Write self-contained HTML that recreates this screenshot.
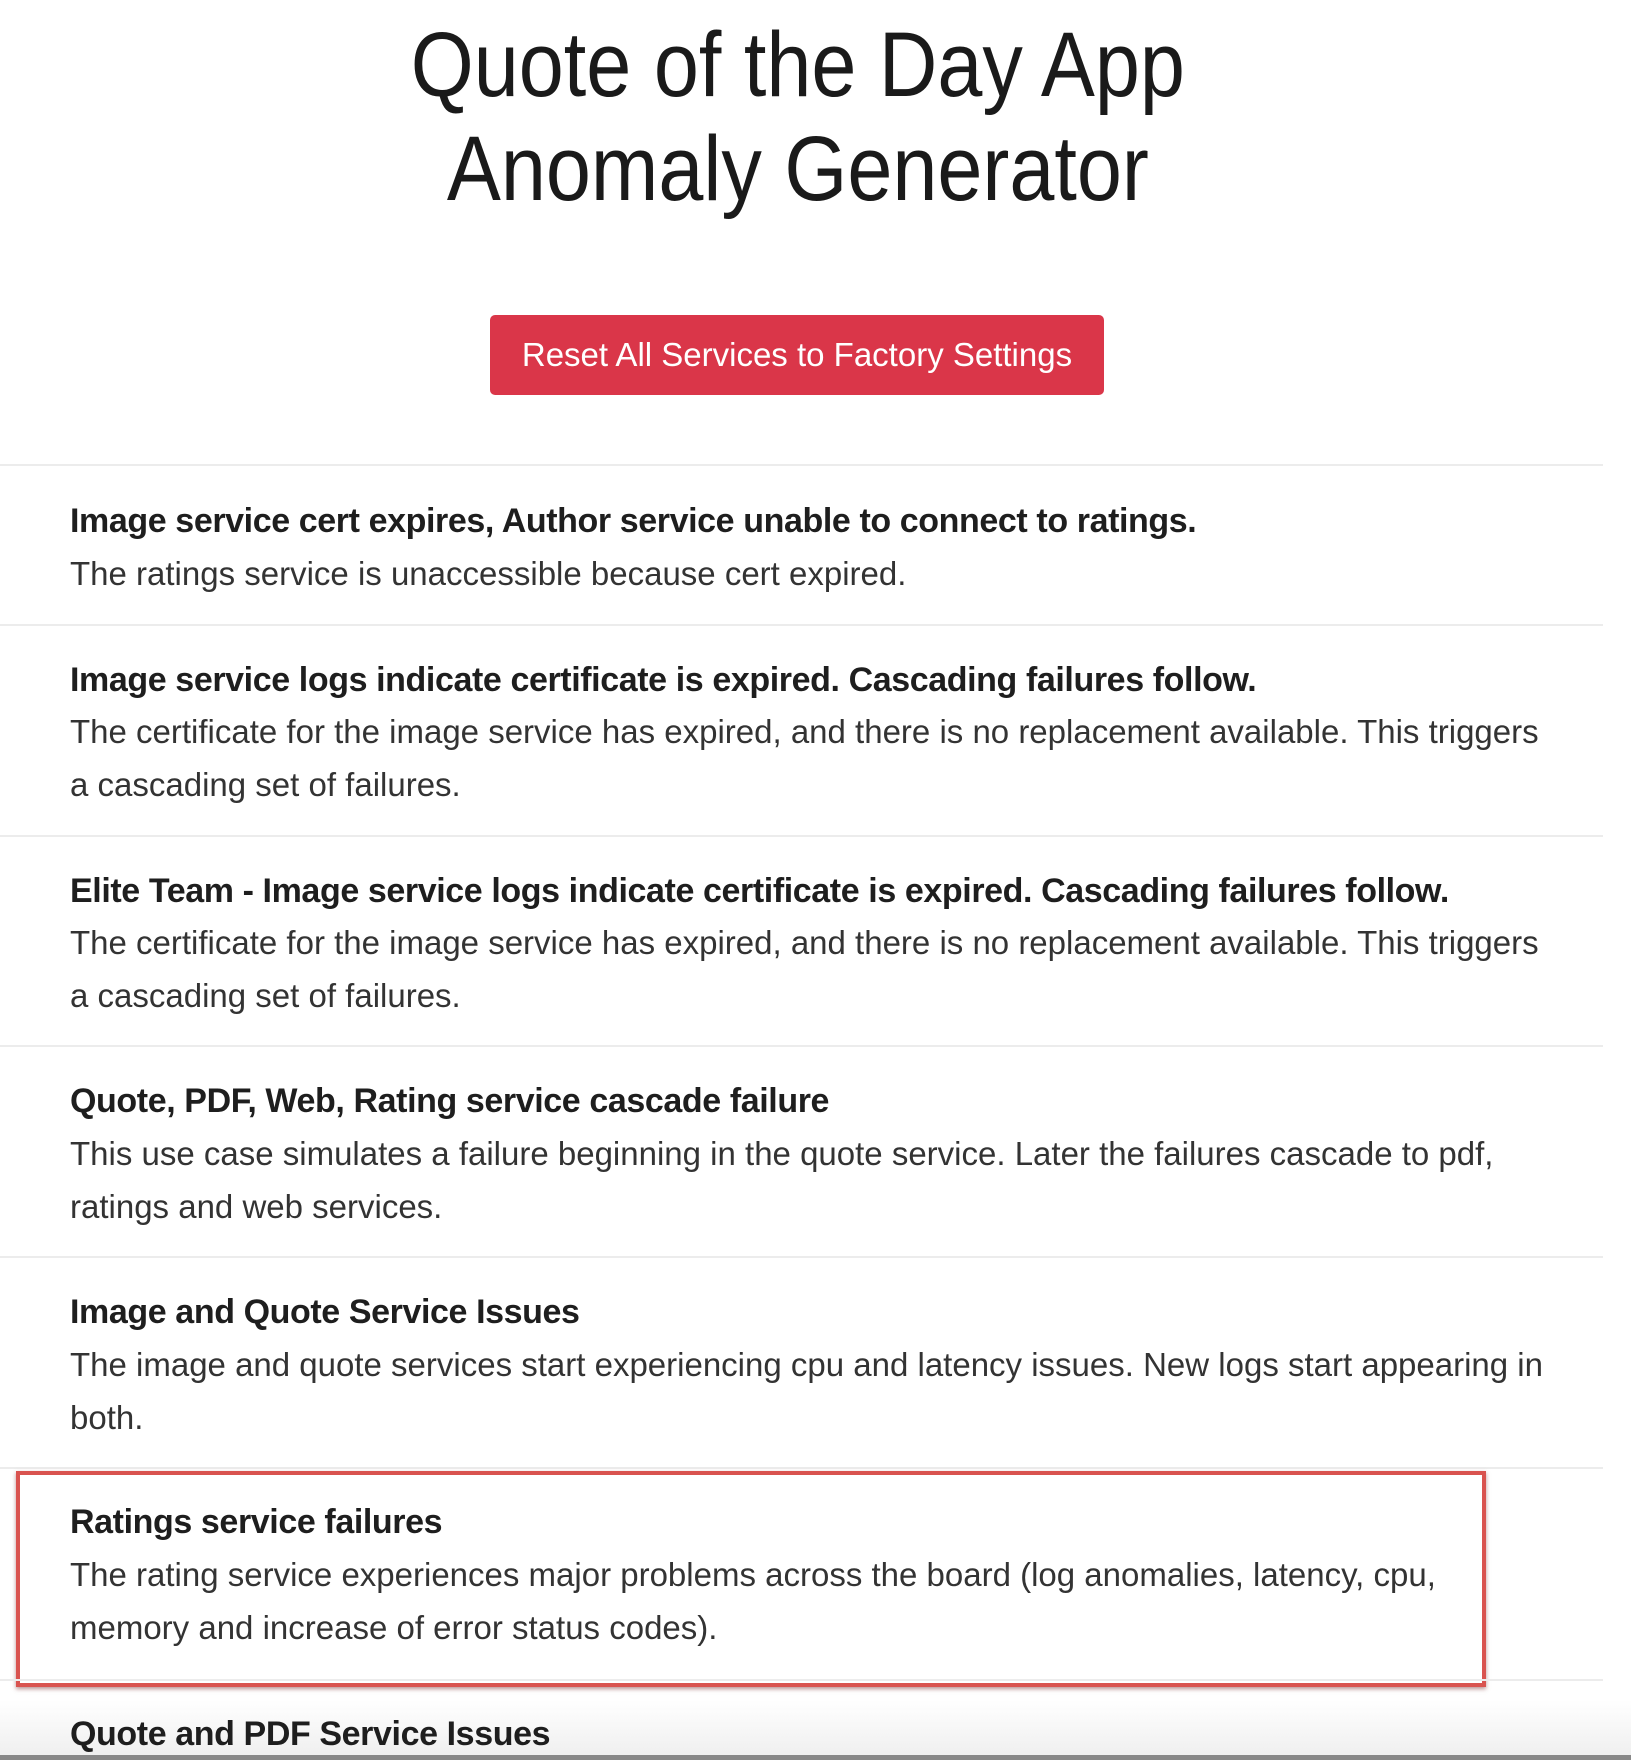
<!DOCTYPE html>
<html><head><meta charset="utf-8"><style>
html,body{margin:0;padding:0;background:#fff;}
body{width:1631px;height:1760px;position:relative;overflow:hidden;font-family:"Liberation Sans",sans-serif;color:#222;}
.t{position:absolute;left:-18px;width:1631px;text-align:center;font-size:92px;line-height:100px;color:#1a1a1a;}
.t span{display:inline-block;transform:scaleX(0.88);}
.btn{position:absolute;left:490px;top:315px;width:614px;height:80px;background:#da3649;border-radius:5px;color:#fff;font-size:33px;line-height:80px;text-align:center;}
.hr{position:absolute;left:0;width:1603px;height:2px;background:#ececec;}
.h{position:absolute;left:70px;font-weight:bold;font-size:34px;line-height:40px;color:#1e1e1e;letter-spacing:-0.4px;white-space:nowrap;}
.d{position:absolute;left:70px;font-size:33px;line-height:53px;color:#333;width:1560px;white-space:nowrap;}
.box{position:absolute;left:16px;top:1471px;width:1462px;height:208px;border:4px solid #d9534f;box-shadow:0 2px 4px rgba(120,40,40,.5);}
.foot{position:absolute;left:0;top:1700px;width:1631px;height:60px;background:linear-gradient(#fff,#eee);}
.bar{position:absolute;left:0;top:1755px;width:1631px;height:5px;background:#888;}
</style></head><body>
<div class="t" style="top:15px"><span>Quote of the Day App</span></div>
<div class="t" style="top:119px"><span>Anomaly Generator</span></div>
<div class="btn">Reset All Services to Factory Settings</div>

<div class="hr" style="top:464px"></div>
<div class="h" style="top:501px">Image service cert expires, Author service unable to connect to ratings.</div>
<div class="d" style="top:547px">The ratings service is unaccessible because cert expired.</div>

<div class="hr" style="top:624px"></div>
<div class="h" style="top:660px">Image service logs indicate certificate is expired. Cascading failures follow.</div>
<div class="d" style="top:705px">The certificate for the image service has expired, and there is no replacement available. This triggers<br>a cascading set of failures.</div>

<div class="hr" style="top:835px"></div>
<div class="h" style="top:871px">Elite Team - Image service logs indicate certificate is expired. Cascading failures follow.</div>
<div class="d" style="top:916px">The certificate for the image service has expired, and there is no replacement available. This triggers<br>a cascading set of failures.</div>

<div class="hr" style="top:1045px"></div>
<div class="h" style="top:1081px">Quote, PDF, Web, Rating service cascade failure</div>
<div class="d" style="top:1127px">This use case simulates a failure beginning in the quote service. Later the failures cascade to pdf,<br>ratings and web services.</div>

<div class="hr" style="top:1256px"></div>
<div class="h" style="top:1292px">Image and Quote Service Issues</div>
<div class="d" style="top:1338px">The image and quote services start experiencing cpu and latency issues. New logs start appearing in<br>both.</div>

<div class="hr" style="top:1467px"></div>
<div class="h" style="top:1502px">Ratings service failures</div>
<div class="d" style="top:1548px">The rating service experiences major problems across the board (log anomalies, latency, cpu,<br>memory and increase of error status codes).</div>
<div class="box"></div>

<div class="foot"></div>
<div class="hr" style="top:1679px"></div>
<div class="h" style="top:1714px">Quote and PDF Service Issues</div>
<div class="bar"></div>
</body></html>
